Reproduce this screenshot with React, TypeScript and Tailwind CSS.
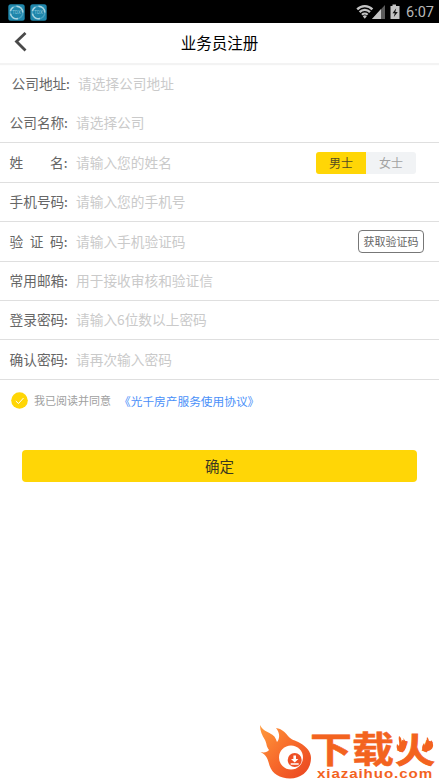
import type { ReactNode } from "react";

const rows = [
  { label: "公司名称", hint: "请选择公司", height: "h-[40px]" },
  { label: "姓名", hint: "请输入您的姓名", height: "h-[40px]", action: "gender" },
  { label: "手机号码", hint: "请输入您的手机号", height: "h-[39px]" },
  { label: "验证码", hint: "请输入手机验证码", height: "h-[40px]", action: "code" },
  { label: "常用邮箱", hint: "用于接收审核和验证信", height: "h-[39px]" },
  { label: "登录密码", hint: "请输入6位数以上密码", height: "h-[39px]" },
  { label: "确认密码", hint: "请再次输入密码", height: "h-[40px]" },
];

function AppBadge() {
  return (
    <svg width="17" height="17" viewBox="0 0 17 17">
      <rect x="0.3" y="0.3" width="16.4" height="16.4" rx="2.5" fill="#1f86ab" />
      <circle cx="8.5" cy="8.5" r="6.3" fill="none" stroke="#49a3c2" strokeWidth="1.5" />
      <path d="M8.5 2.2a6.3 6.3 0 0 1 6.3 6.3M10 14.6a6.3 6.3 0 0 1-7.6-4.9M2.4 7a6.3 6.3 0 0 1 3-3.9" fill="none" stroke="#a9d3df" strokeWidth="1.5" />
      <text x="8.5" y="10.2" textAnchor="middle" fontSize="4.6" fill="#8cc5d8" fontFamily="Roboto, sans-serif">TDX</text>
    </svg>
  );
}

function StatusBar() {
  return (
    <div className="flex h-[23px] items-center justify-between bg-black pl-2 pr-[5px]">
      <div className="flex gap-[5px] pt-px">
        <AppBadge />
        <AppBadge />
      </div>
      <div className="flex items-center">
        <svg width="46" height="16" viewBox="0 0 46 16">
          <g fill="none" stroke="#c4c4c4" strokeWidth="2.3">
            <path d="M2.2 5.4a10.6 10.6 0 0 1 15.2 0" />
            <path d="M4.6 8.1a7.3 7.3 0 0 1 10.4 0" />
            <path d="M7 10.7a4 4 0 0 1 5.6 0" />
          </g>
          <path d="M7.8 12.2a3 3 0 0 1 4 0l-2 2.5z" fill="#c4c4c4" />
          <path d="M30 1v14H17z" fill="#5b5b5b" />
          <path d="M26 5v10H17z" fill="#c4c4c4" />
          <path d="M37.500 .5H41V2h3.500v13h-9V2h2z" fill="#c4c4c4" />
          <path d="M41.200 4.200 37.500 9.300h2.300l-1 3.600 4-5h-2.500z" fill="#111" />
        </svg>
        <span className="relative top-[1.5px] ml-[5px] font-['Roboto','Noto_Sans_CJK_SC',sans-serif] text-[14.5px] leading-none text-[#b8b8b8]">6:07</span>
      </div>
    </div>
  );
}

function Label({ text }: { text: string }) {
  return (
    <span className="flex w-[58px] shrink-0 text-[#666]">
      <span className="flex w-[54.5px] justify-between">
        {[...text].map((char, i) => (
          <span key={i}>{char}</span>
        ))}
      </span>
      :
    </span>
  );
}

function Field({ label, hint, children }: { label: string; hint: string; children?: ReactNode }) {
  return (
    <>
      <Label text={label} />
      <span className="ml-[8.5px] flex-1 text-[#cacaca]">{hint}</span>
      {children}
    </>
  );
}

function GenderSwitch() {
  return (
    <div className="mr-[23px] mt-px flex h-[22px] w-[100px] overflow-hidden rounded-[3px] text-[12px]">
      <button className="flex-1 bg-[#ffd606] text-[#554d22]">男士</button>
      <button className="flex-1 bg-[#f1f3f5] text-[#a2a2a2]">女士</button>
    </div>
  );
}

function CodeButton() {
  return (
    <button className="mr-[15px] h-[23px] w-[66px] whitespace-nowrap rounded-[4px] border border-[#777] text-[11px] leading-none text-[#666]">
      获取验证码
    </button>
  );
}

function Watermark() {
  return (
    <svg className="absolute bottom-0 right-0" width="184" height="62" viewBox="255 720 184 62">
      <defs>
        <linearGradient id="flame" x1="0" y1="0" x2="1" y2="1">
          <stop offset="0" stopColor="#ff9a3c" />
          <stop offset="0.5" stopColor="#f76a2b" />
          <stop offset="1" stopColor="#e94420" />
        </linearGradient>
      </defs>
      <path
        d="M260 725c3 6 7 6 11 9 4 2 5 5 6 8 3-4 3-9-1-14 6 1 9 4 12 8 3 4 7 4 12 7 7 4 11 9 11 15 0 12-9 20.500-21 20.500-10 0-18-5-20.500-13-1.500-5-2-10-9-13.500 4 1 7 0 8.500-2-3-4-2-6-4-10-3-5-5-9-5-15z"
        fill="url(#flame)"
      />
      <circle cx="291" cy="757.5" r="12" fill="#fff" />
      <circle cx="294.7" cy="760" r="7" fill="#ee5025" />
      <path d="M293.400 755.500h2.600v3.500h2.400l-3.700 3.600-3.700-3.600h2.400zM290.700 763.300h8v1.400h-8z" fill="#fff" />
      <g fill="#f3631f" fontWeight="700" fontFamily="'Noto Sans CJK SC', sans-serif">
        <text transform="translate(310 762.5) scale(1 .86)" fontSize="42" stroke="#f3631f" strokeWidth=".6">下载</text>
        <text transform="translate(395 762.5) scale(1 .86)" fontSize="40" stroke="#f3631f" strokeWidth="1">火</text>
        {/* small flames on both sides of 火 */}
        <path d="M399 736c4 3 1 5 4 7 1-1 1-3 0-5 4 4 4 9 1 13l-4 1c-3-2-4-4-3-8l2 2c1-4-1-6 0-10z" />
        <path d="M427 737c3 3 1 5 2 7 1 0 2-2 2-4 4 5 2 10-3 11l-5 0c-2-4 0-6 1-8l1 3c3-3 1-5 2-9z" />
      </g>
      <text x="317" y="777.5" textLength="116" lengthAdjust="spacingAndGlyphs" letterSpacing=".8" fill="#f3631f" fontSize="13.5" fontWeight="700" fontFamily="'Liberation Sans', sans-serif">xiazaihuo.com</text>
    </svg>
  );
}

export default function App() {
  return (
    <div className="relative h-[782px] w-[439px] overflow-hidden bg-white font-['Noto_Sans_CJK_SC',sans-serif] text-[13.7px]">
      <StatusBar />
      <header className="relative flex h-[41px] items-center justify-center border-b border-[#f3f3f3] shadow-[0_1px_1px_#f3f3f3]">
        <svg className="absolute left-[14px] top-[9px]" width="13" height="20" viewBox="0 0 13 20">
          <path d="M11.5 1 2.500 9.500l9 9" fill="none" stroke="#4a4a4a" strokeWidth="2.8" />
        </svg>
        <h1 className="text-[15.5px] text-black">业务员注册</h1>
      </header>

      <main>
        <div className="flex h-[39px] items-center pl-[11.5px]">
          <Field label="公司地址" hint="请选择公司地址" />
        </div>
        {rows.map((row) => (
          <div key={row.label} className={`flex items-center border-b border-[#dfdfdf] pb-px pl-[9.5px] ${row.height}`}>
            <Field label={row.label} hint={row.hint}>
              {row.action === "gender" && <GenderSwitch />}
              {row.action === "code" && <CodeButton />}
            </Field>
          </div>
        ))}

        <div className="flex h-[41px] items-center pl-[11px]">
          <svg width="17" height="17" viewBox="0 0 17 17">
            <circle cx="8.5" cy="8.5" r="8.3" fill="#ffd606" />
            <path d="m4.800 9 2.700 2.500 5-5.500" fill="none" stroke="#fff" strokeWidth="1" />
          </svg>
          <span className="ml-[6px] text-[11px] text-[#a0a0a0]">我已阅读并同意</span>
          <a href="#" className="ml-[8px] text-[11.7px] text-[#4a90f9]">《光千房产服务使用协议》</a>
        </div>

        <button className="ml-[22px] mt-[29px] block h-[32px] w-[395px] rounded-[4px] bg-[#ffd606] text-[14.5px] text-[#3b3820]">
          确定
        </button>
      </main>
      <Watermark />
    </div>
  );
}
